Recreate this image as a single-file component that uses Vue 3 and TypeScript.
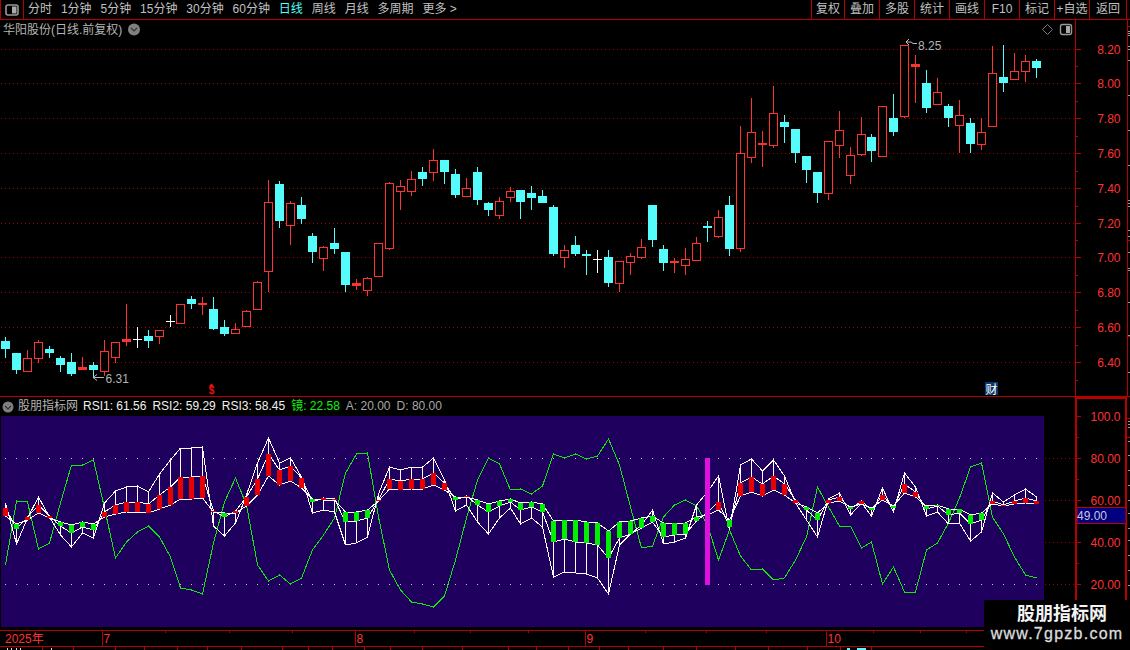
<script setup lang="ts">
type Kind = 'r' | 'c' | 'w'
type Candle = [Kind, number, number, number, number]

const STEP = 10.968
const xAt = (i: number) => Math.round(5 + STEP * i)

const raw: Candle[] = [
  ['c',337,341,349,358],['c',353,353,370,374],['r',350,358,371,371],['r',340,342,358,363],['c',346,349,353,358],
  ['c',356,358,365,372],['c',353,362,374,376],['r',357,367,370,370],['c',362,365,370,377],['r',340,351,371,376],
  ['r',342,342,357,363],['r',304,339,342,346],['w',327,339,339,348],['c',330,336,341,348],['r',330,330,336,344],
  ['w',315,321,321,327],['r',304,304,323,323],['c',296,299,304,309],['r',297,303,305,315],['c',297,309,329,330],
  ['c',320,327,334,336],['r',323,329,333,334],['r',310,311,326,326],['r',281,282,309,309],['r',180,202,271,292],
  ['c',181,184,221,228],['r',201,203,225,245],['c',197,205,219,224],['c',233,236,252,263],['r',246,247,258,271],
  ['c',228,243,249,254],['c',252,252,285,292],['r',279,283,286,290],['r',277,278,290,296],['r',243,243,276,276],
  ['r',182,183,248,250],['r',180,186,191,210],['r',171,179,191,196],['c',167,172,179,186],['r',149,160,172,181],
  ['c',160,160,172,184],['c',169,174,195,198],['r',178,188,196,196],['c',167,172,200,205],['c',202,203,210,216],
  ['r',197,201,215,219],['r',187,191,197,202],['c',190,190,202,219],['c',186,193,198,210],['c',190,196,203,203],
  ['c',205,207,254,256],['r',245,250,257,268],['c',236,245,254,256],['c',250,254,255,275],['w',250,259,259,273],
  ['c',250,257,283,287],['r',261,261,283,292],['r',253,256,262,275],['r',239,247,257,259],['c',205,205,240,247],
  ['c',245,249,263,271],['r',258,261,263,273],['r',248,259,265,275],['r',237,243,260,261],['c',221,226,227,242],
  ['r',210,217,236,238],['c',196,205,249,256],['r',126,153,248,252],['r',98,132,157,163],['r',131,143,145,167],
  ['r',86,113,145,148],['c',115,122,127,143],['c',129,129,153,163],['c',156,156,170,183],['c',172,172,193,203],
  ['r',141,141,193,200],['r',111,130,145,158],['r',147,155,175,184],['r',117,134,154,156],['c',134,137,151,162],
  ['r',106,106,156,156],['c',94,118,132,136],['r',45,45,116,118],['r',55,64,67,103],['c',70,83,108,113],
  ['r',78,92,104,104],['c',104,106,118,127],['r',100,115,125,153],['c',118,123,144,153],['r',118,132,144,150],
  ['r',46,73,126,127],['c',45,77,83,92],['r',53,71,79,79],['r',55,61,71,82],['c',59,61,68,78]
]

const candles = raw.map((c, i) => {
  const x = xAt(i)
  const [kind, high, top, bottom, low] = c
  return { i, x, kind, high, top, bottom, low, flat: kind !== 'c' && bottom - top <= 3 }
})

type Bar = [number, number, 'r' | 'g', number, number]
// bar top, bar bottom, colour, outer line, green line — in 3x crop units below y=410
const rawBars: Bar[] = [
  [294,317,'r',280,465],[342,358,'g',402,272],[321,329,'r',325,277],[286,309,'r',260,416],[317,324,'r',320,400],
  [336,347,'g',375,280],[346,368,'g',412,166],[337,350,'g',370,166],[342,360,'g',385,150],[305,320,'r',280,295],
  [285,311,'r',243,445],[276,305,'r',230,395],[276,306,'r',229,365],[282,309,'r',245,347],[255,297,'r',192,380],
  [231,285,'r',150,440],[202,267,'r',115,535],[202,266,'r',115,539],[198,263,'r',112,553],[303,306,'r',347,400],
  [310,320,'g',377,275],[304,308,'r',340,203],[262,287,'r',255,285],[208,255,'r',160,465],[132,198,'r',85,513],
  [180,225,'r',158,496],[168,213,'r',143,522],[204,234,'r',200,505],[268,275,'g',310,420],[265,269,'r',300,375],
  [266,270,'r',305,325],[306,335,'g',406,190],[305,332,'g',400,133],[300,323,'g',380,130],[269,274,'r',252,320],
  [208,236,'r',170,480],[213,241,'r',181,541],[208,236,'r',172,575],[207,236,'r',172,582],[190,224,'r',143,590],
  [219,241,'r',210,558],[262,269,'g',303,450],[259,262,'r',286,325],[270,285,'g',335,210],[281,305,'g',372,143],
  [274,288,'g',325,162],[268,276,'g',295,241],[280,300,'g',342,236],[276,292,'g',325,253],[283,305,'g',350,228],
  [334,395,'g',500,133],[331,388,'g',485,143],[331,395,'g',490,133],[337,398,'g',493,146],[340,404,'g',505,137],
  [363,443,'g',552,88],[337,383,'g',405,165],[333,372,'g',373,290],[324,353,'g',345,413],[318,336,'g',301,407],
  [340,380,'g',402,322],[340,376,'g',395,285],[340,372,'g',385,271],[321,333,'g',285,288],[305,316,'r',245,345],
  [275,300,'r',197,450],[330,350,'g',360,360],[220,257,'r',165,437],[202,246,'r',147,480],[221,257,'r',183,478],
  [198,239,'r',150,510],[221,255,'r',198,503],[270,279,'r',280,450],[292,299,'g',330,380],[310,329,'g',382,232],
  [270,279,'r',268,290],[262,272,'r',250,349],[291,297,'g',316,349],[274,282,'r',280,415],[295,300,'g',318,395],
  [256,270,'r',235,522],[288,294,'g',305,472],[222,248,'r',190,547],[246,260,'r',230,545],[288,296,'g',319,420],
  [284,287,'g',305,400],[298,315,'g',343,340],[298,308,'g',340,265],[315,341,'g',393,170],[310,329,'g',365,160],
  [274,282,'r',250,320],[284,287,'r',276,372],[274,282,'r',255,440],[265,279,'r',238,495],[273,282,'r',260,505]
]
const py = (v: number) => Math.round(410 + v / 3)

const bars = rawBars.map((b, i) => {
  const x = xAt(i)
  const top = py(b[0])
  const bottom = Math.max(py(b[1]), top + 1)
  const outer = py(b[3])
  const stickFrom = outer < top ? outer : bottom
  const stickTo = outer < top ? top : outer
  return { i, x, top, bottom, height: bottom - top, red: b[2] === 'r', stickFrom, stickTo, outer, green: py(b[4]) }
})
const px = (b: { x: number }) => b.x + 0.5
const line1 = bars.map((b) => `${px(b)},${b.outer}`).join(' ')
const line2 = bars.map((b) => `${px(b)},${b.red ? b.top : b.bottom}`).join(' ')
const line3 = bars.map((b) => `${px(b)},${b.red ? b.bottom : b.top}`).join(' ')
const lineG = bars.map((b) => `${px(b)},${b.green}`).join(' ')

const priceTicks = [
  ['8.20',49],['8.00',83],['7.80',118],['7.60',153],['7.40',188],['7.20',223],['7.00',257],['6.80',292],['6.60',327],['6.40',362]
] as const
const priceMinor = [66,101,136,171,206,240,275,310,345,380]
const rsiTicks = [['100.0',416],['80.00',458],['60.00',500],['40.00',542],['20.00',584]] as const
const rsiMinor = [437,479,521,563]
const stripUpper = [31,33,35,46,49,60,95,130,165,200,203,206,230,236,252,268,270,302,335,372]
const stripLower = [421,424,427,441,455,470,485,500,513,528,540,555,570,585]

const leftTabs = ['分时','1分钟','5分钟','15分钟','30分钟','60分钟','日线','周线','月线','多周期']
const rightBtns = ['复权','叠加','多股','统计','画线','F10','标记','+自选','返回']

const dateTicks = [165,229,292,414,470,528,645,706,766,873,920,966]
const dateMajor = [
  { x: 102, label: '7' }, { x: 355, label: '8' }, { x: 585, label: '9' }, { x: 826, label: '10' }
]
const footTicks = [42,73,115,144,177,207,241,282,308,332,364,390,422,462,508,536,568,599,628,663,696,735,768,807,840,871]
</script>

<template>
  <div class="screen">
    <header class="toolbar">
      <div class="layout-btn">
        <svg width="14" height="12" viewBox="0 0 14 12">
          <rect x="1" y="1" width="12" height="10" rx="2" fill="#000" stroke="#999" stroke-width="1.6" />
          <rect x="7" y="2.5" width="4.5" height="7" fill="#aaa" />
        </svg>
      </div>
      <nav class="tabs">
        <span v-for="t in leftTabs" :key="t" class="tab" :class="{ active: t === '日线' }">{{ t }}</span>
        <span class="tab more">更多 &gt;</span>
      </nav>
      <div class="actions">
        <span v-for="b in rightBtns" :key="b" class="act">{{ b }}</span>
      </div>
    </header>

    <section class="main">
      <svg class="price" width="1075" height="376" viewBox="0 20 1075 376">
        <g stroke="#a00000" stroke-dasharray="1 3">
          <line v-for="t in priceTicks" :key="t[0]" x1="1" x2="1075" :y1="t[1] + 0.5" :y2="t[1] + 0.5" />
        </g>
        <text class="title" x="3" y="33.5">华阳股份(日线.前复权)</text>
        <g>
          <circle cx="134" cy="29.5" r="6" fill="#808080" />
          <path d="M131 28l3 3 3-3" fill="none" stroke="#333" stroke-width="1.2" />
        </g>
        <path d="M1047.5 24.5l5 5-5 5-5-5z" fill="none" stroke="#777" />
        <rect x="1060.5" y="24.5" width="11" height="10" rx="2" fill="#000" stroke="#999" stroke-width="1.4" />
        <rect x="1066" y="26" width="4" height="7" fill="#aaa" />

        <g v-for="c in candles" :key="c.i">
          <template v-if="c.kind === 'c'">
            <rect :x="c.x" :y="c.high" width="1" :height="c.low - c.high" fill="#54fcfc" />
            <rect :x="c.x - 4" :y="c.top" width="9" :height="Math.max(c.bottom - c.top, 2)" fill="#54fcfc" />
          </template>
          <template v-else-if="c.kind === 'w'">
            <rect :x="c.x" :y="c.high" width="1" :height="c.low - c.high" fill="#fff" />
            <rect :x="c.x - 4" :y="c.top" width="9" height="1" fill="#fff" />
          </template>
          <template v-else>
            <rect :x="c.x" :y="c.high" width="1" :height="c.top - c.high" fill="#ff3232" />
            <rect :x="c.x" :y="c.bottom" width="1" :height="c.low - c.bottom" fill="#ff3232" />
            <rect v-if="c.flat" :x="c.x - 4" :y="c.top" width="9" :height="c.bottom - c.top" fill="#ff3232" />
            <rect v-else :x="c.x - 3.5" :y="c.top + 0.5" width="8" :height="c.bottom - c.top" fill="#000" stroke="#ff3232" />
          </template>
        </g>

        <path d="M104 377.5H93M97 374.5l-4 3 4 3" fill="none" stroke="#bbb" />
        <text class="mark" x="105.5" y="382.5">6.31</text>
        <path d="M909 39l-3 3 3 3M906 42h5l2 1.500h4" fill="none" stroke="#bbb" />
        <text class="mark" x="918" y="49.500">8.25</text>

        <path d="M211.500 383.500l3 3h-6z" fill="#f01010" />
        <text class="dollar" x="211.500" y="393.500" text-anchor="middle">$</text>
        <rect x="985" y="382" width="13" height="13" fill="#0a3a6a" />
        <text class="cai" x="985.500" y="393.500">财</text>
      </svg>
      <svg class="axis" width="55" height="376" viewBox="1075 20 55 376">
        <g stroke="#b80000">
          <line x1="1075.5" x2="1075.5" y1="20" y2="396" />
          <line x1="1127.5" x2="1127.5" y1="20" y2="396" />
          <line x1="1127" x2="1130" y1="26.500" y2="26.500" />
          <line x1="1127" x2="1130" y1="240.500" y2="240.500" />
          <line x1="1127" x2="1130" y1="336.500" y2="336.500" />
          <line v-for="t in priceTicks" :key="t[0]" x1="1075" x2="1081" :y1="t[1] + 0.5" :y2="t[1] + 0.5" />
          <line v-for="m in priceMinor" :key="m" x1="1075" x2="1078" :y1="m + 0.5" :y2="m + 0.5" />
        </g>
        <g fill="#999">
          <rect v-for="s in stripUpper" :key="s" x="1128" :y="s" width="2" height="1" />
        </g>
        <text v-for="t in priceTicks" :key="t[0]" class="tick" x="1120.500" :y="t[1] + 4.5" text-anchor="end">{{ t[0] }}</text>
      </svg>
    </section>

    <section class="lower">
      <div class="ind">
        <div class="ind-title">
          <svg width="12" height="12" viewBox="0 0 12 12">
            <circle cx="6" cy="6" r="5.500" fill="#808080" />
            <path d="M3 5l3 3 3-3" fill="none" stroke="#333" stroke-width="1.2" />
          </svg>
          <span class="ind-name">股朋指标网</span>
          <span class="val white">RSI1: 61.56</span>
          <span class="val white">RSI2: 59.29</span>
          <span class="val white">RSI3: 58.45</span>
          <span class="val green">镜: 22.58</span>
          <span class="val grey">A: 20.00</span>
          <span class="val grey">D: 80.00</span>
        </div>
        <svg class="rsi" width="1075" height="214" viewBox="0 416 1075 214">
          <rect x="1" y="416" width="1043" height="211" fill="#20005f" />
          <g fill="#c8c8c8">
            <template v-for="b in bars" :key="b.i">
              <rect :x="b.x" y="458" width="1" height="1" />
              <rect :x="b.x" y="584" width="1" height="1" />
            </template>
          </g>
          <g stroke="#a00000" stroke-dasharray="1 3">
            <line x1="1045" x2="1075" y1="458.500" y2="458.500" />
            <line x1="1045" x2="1075" y1="500.500" y2="500.500" />
            <line x1="1045" x2="1075" y1="542.500" y2="542.500" />
            <line x1="1045" x2="1075" y1="584.500" y2="584.500" />
          </g>
          <polyline :points="lineG" fill="none" stroke="#10e810" shape-rendering="crispEdges" />
          <g fill="#fff">
            <rect v-for="b in bars" :key="b.i" :x="b.x" :y="b.stickFrom" width="1" :height="b.stickTo - b.stickFrom" />
          </g>
          <g fill="none" stroke="#fff" shape-rendering="crispEdges">
            <polyline :points="line1" />
            <polyline :points="line2" />
            <polyline :points="line3" />
          </g>
          <rect v-for="b in bars" :key="b.i" :x="b.x - 2" :y="b.top" width="5" :height="b.height" :fill="b.red ? '#ea0000' : '#00f000'" />
          <rect x="705" y="458" width="5" height="127" fill="#e010e0" />
        </svg>
      </div>
      <svg class="rsi-axis" width="55" height="233" viewBox="1075 397 55 233">
        <g stroke="#b80000">
          <line x1="1076" x2="1076" y1="397" y2="630" stroke-width="2" />
          <line x1="1126" x2="1126" y1="397" y2="630" stroke-width="2" />
          <line x1="1075" x2="1127" y1="398" y2="398" stroke-width="2" />
          <line x1="1127" x2="1130" y1="418.500" y2="418.500" />
          <line x1="1127" x2="1130" y1="437.500" y2="437.500" />
          <line v-for="t in rsiTicks" :key="t[0]" x1="1076" x2="1081" :y1="t[1] + 0.5" :y2="t[1] + 0.5" />
          <line v-for="m in rsiMinor" :key="m" x1="1076" x2="1079" :y1="m + 0.5" :y2="m + 0.5" />
        </g>
        <g fill="#999">
          <rect v-for="s in stripLower" :key="s" x="1128" :y="s" width="2" height="1" />
        </g>
        <text v-for="t in rsiTicks" :key="t[0]" class="tick" x="1120.500" :y="t[1] + 4.5" text-anchor="end">{{ t[0] }}</text>
        <rect x="1077" y="507.500" width="49" height="16" fill="#000080" stroke="#c00000" />
        <text class="cur" x="1077" y="520">49.00</text>
      </svg>
    </section>

    <svg class="dates" width="1130" height="17" viewBox="0 630 1130 17">
      <g stroke="#b80000">
        <line x1="0" x2="1130" y1="630.500" y2="630.500" />
        <line x1="0" x2="1130" y1="646.500" y2="646.500" />
        <line v-for="t in dateTicks" :key="t" :x1="t + 0.5" :x2="t + 0.5" y1="630" y2="633" />
        <line v-for="m in dateMajor" :key="m.x" :x1="m.x + 0.5" :x2="m.x + 0.5" y1="630" y2="646" />
      </g>
      <text class="tick" x="5" y="643">2025年</text>
      <text v-for="m in dateMajor" :key="m.x" class="tick" :x="m.x + 1.5" y="643">{{ m.label }}</text>
    </svg>
    <svg class="foot" width="1130" height="3" viewBox="0 647 1130 3">
      <g fill="#b80000">
        <rect v-for="t in footTicks" :key="t" :x="t" y="647" width="1" height="3" />
      </g>
      <rect x="7" y="648" width="1" height="2" fill="#ddd" />
      <rect x="11" y="648" width="1" height="2" fill="#ddd" />
      <rect x="16" y="648" width="1" height="2" fill="#ddd" />
      <rect x="20" y="648" width="1" height="2" fill="#ddd" />
      <rect x="51" y="648" width="1" height="2" fill="#ddd" />
      <rect x="847" y="648" width="3" height="2" fill="#54fcfc" />
      <rect x="857" y="648" width="9" height="2" fill="#54fcfc" />
    </svg>

    <aside class="watermark">
      <div class="wm-name">股朋指标网</div>
      <div class="wm-url">www.7gpzb.com</div>
    </aside>
  </div>
</template>

<style scoped>
.screen {
  position: relative;
  width: 1130px;
  height: 650px;
  overflow: hidden;
  background: #000;
  display: flex;
  flex-direction: column;
  font-family: "Liberation Sans", "Noto Sans CJK SC", sans-serif;
  font-size: 12px;
  color: #c0c0c0;
}
svg {
  display: block;
  flex: none;
}
.toolbar {
  flex: 0 0 20px;
  box-sizing: border-box;
  display: flex;
  align-items: stretch;
  padding-right: 3px;
  border-bottom: 1px solid #b80000;
  line-height: 19px;
}
.layout-btn {
  flex: 0 0 24px;
  box-sizing: border-box;
  border-left: 1px solid #b80000;
  border-right: 1px solid #b80000;
  display: flex;
  align-items: center;
  justify-content: center;
}
.tabs {
  display: flex;
  gap: 8.9px;
  padding-left: 4px;
}
.tab.active {
  color: #54fcfc;
}
.actions {
  margin-left: auto;
  display: flex;
  border-right: 1px solid #b80000;
}
.act {
  flex: 0 0 35px;
  box-sizing: border-box;
  border-left: 1px solid #b80000;
  text-align: center;
  white-space: nowrap;
}
.act:first-child {
  flex-basis: 33px;
}
.act:last-child {
  flex-basis: 37px;
}
.main {
  flex: 0 0 377px;
  box-sizing: border-box;
  display: flex;
  border-bottom: 1px solid #b80000;
}
.title,
.mark {
  fill: #b4b4b4;
  font-size: 12px;
}
.dollar {
  fill: #f01010;
  font-size: 10px;
  font-weight: 700;
}
.cai {
  fill: #fff;
  font-size: 12px;
}
.tick {
  fill: #ff3232;
  font-size: 12px;
}
.cur {
  fill: #c8c8d8;
  font-size: 12px;
}
.lower {
  flex: 0 0 233px;
  display: flex;
}
.ind {
  flex: 0 0 1075px;
  display: flex;
  flex-direction: column;
}
.ind-title {
  flex: 0 0 19px;
  display: flex;
  align-items: center;
  gap: 6px;
  padding-left: 2px;
  line-height: 19px;
}
.ind-title svg {
  margin-right: -2px;
}
.ind-name {
  color: #b4b4b4;
  margin-right: -1px;
}
.val {
  white-space: nowrap;
}
.white {
  color: #f0f0f0;
}
.green {
  color: #10f010;
}
.grey {
  color: #a8a8a8;
}
.watermark {
  position: absolute;
  left: 984px;
  top: 600px;
  width: 146px;
  height: 50px;
  background: #000;
  text-align: center;
}
.wm-name {
  margin-top: 4px;
  font-size: 18px;
  line-height: 20px;
  font-weight: 700;
  color: #f4f4f4;
  padding-left: 10px;
}
.wm-url {
  font-size: 16px;
  line-height: 20px;
  letter-spacing: 1.25px;
  color: #dcdcdc;
  -webkit-text-stroke: 0.3px #dcdcdc;
}
</style>
